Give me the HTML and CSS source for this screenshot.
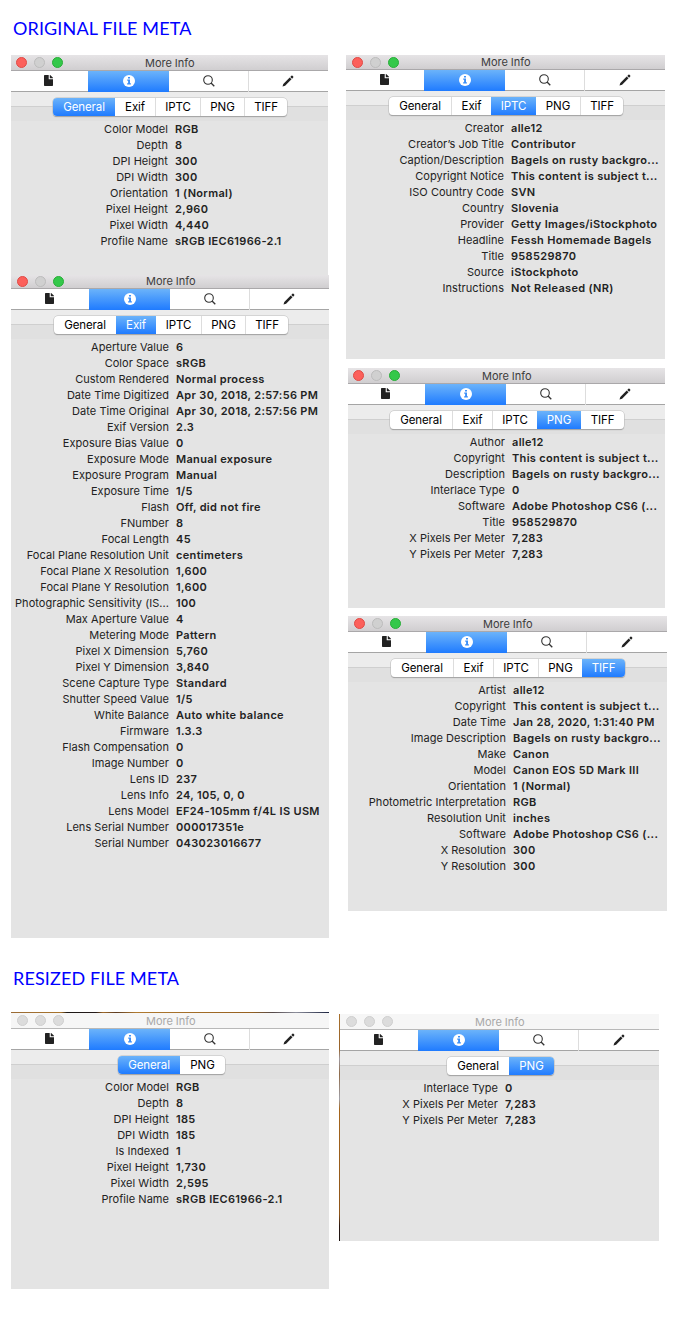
FILE: index.html
```html
<!DOCTYPE html>
<html lang="en">
<head>
<meta charset="utf-8">
<title>File meta</title>
<link rel="stylesheet" href="styles.css">
</head>
<body>
<svg class="defs" aria-hidden="true">
<symbol id="file" viewBox="0 0 9 11"><path d="M0 .7Q0 0 .7 0H4.700V4.200H9V10.300Q9 11 8.300 11H.7Q0 11 0 10.300ZM5.800 0H6.200L9 2.700V3.200H5.800Z" fill="#222"/></symbol>
<symbol id="info" viewBox="0 0 12 12"><circle cx="6" cy="6" r="6" fill="#fff"/><path d="M5 1.900h2v1.700H5ZM4.200 4.600H7V8.300H7.900V9.500H4.100V8.300H5.100V5.700H4.200Z" fill="#3c8ff8"/></symbol>
<symbol id="search" viewBox="0 0 12 12"><circle cx="5" cy="5" r="4.300" fill="none" stroke="#333" stroke-width="1.100"/><path d="M8 8L11.300 11.300" stroke="#333" stroke-width="1.300"/></symbol>
<symbol id="pen" viewBox="0 0 12 12"><path d="M.5 11.500L1.300 8.900L7.700 2.500L9.500 4.300L3.100 10.700ZM8.300 1.900L9.400.8Q9.900.3 10.500.8L11.200 1.500Q11.700 2.100 11.200 2.600L10.100 3.700Z" fill="#222"/></symbol>
</svg>
<main class="page">
<section class="group original">
<h2>ORIGINAL FILE META</h2>
<div class="columns">
<div class="column">
<article class="panel p-general">
<header><i class="red"></i><i></i><i class="green"></i><span>More Info</span></header>
<nav><a><svg class="file"><use href="#file"/></svg></a><a class="on"><svg><use href="#info"/></svg></a><a><svg><use href="#search"/></svg></a><a><svg><use href="#pen"/></svg></a></nav>
<div class="band"><div class="seg"><b class="on">General</b><b>Exif</b><b>IPTC</b><b>PNG</b><b>TIFF</b></div></div>
<dl>
<dt>Color Model</dt><dd>RGB</dd>
<dt>Depth</dt><dd>8</dd>
<dt>DPI Height</dt><dd>300</dd>
<dt>DPI Width</dt><dd>300</dd>
<dt>Orientation</dt><dd>1 (Normal)</dd>
<dt>Pixel Height</dt><dd>2,960</dd>
<dt>Pixel Width</dt><dd>4,440</dd>
<dt>Profile Name</dt><dd>sRGB IEC61966-2.1</dd>
</dl>
</article>
<article class="panel p-exif">
<header><i class="red"></i><i></i><i class="green"></i><span>More Info</span></header>
<nav><a><svg class="file"><use href="#file"/></svg></a><a class="on"><svg><use href="#info"/></svg></a><a><svg><use href="#search"/></svg></a><a><svg><use href="#pen"/></svg></a></nav>
<div class="band"><div class="seg"><b>General</b><b class="on">Exif</b><b>IPTC</b><b>PNG</b><b>TIFF</b></div></div>
<dl>
<dt>Aperture Value</dt><dd>6</dd>
<dt>Color Space</dt><dd>sRGB</dd>
<dt>Custom Rendered</dt><dd>Normal process</dd>
<dt>Date Time Digitized</dt><dd>Apr 30, 2018, 2:57:56 PM</dd>
<dt>Date Time Original</dt><dd>Apr 30, 2018, 2:57:56 PM</dd>
<dt>Exif Version</dt><dd>2.3</dd>
<dt>Exposure Bias Value</dt><dd>0</dd>
<dt>Exposure Mode</dt><dd>Manual exposure</dd>
<dt>Exposure Program</dt><dd>Manual</dd>
<dt>Exposure Time</dt><dd>1/5</dd>
<dt>Flash</dt><dd>Off, did not fire</dd>
<dt>FNumber</dt><dd>8</dd>
<dt>Focal Length</dt><dd>45</dd>
<dt>Focal Plane Resolution Unit</dt><dd>centimeters</dd>
<dt>Focal Plane X Resolution</dt><dd>1,600</dd>
<dt>Focal Plane Y Resolution</dt><dd>1,600</dd>
<dt>Photographic Sensitivity (IS...</dt><dd>100</dd>
<dt>Max Aperture Value</dt><dd>4</dd>
<dt>Metering Mode</dt><dd>Pattern</dd>
<dt>Pixel X Dimension</dt><dd>5,760</dd>
<dt>Pixel Y Dimension</dt><dd>3,840</dd>
<dt>Scene Capture Type</dt><dd>Standard</dd>
<dt>Shutter Speed Value</dt><dd>1/5</dd>
<dt>White Balance</dt><dd>Auto white balance</dd>
<dt>Firmware</dt><dd>1.3.3</dd>
<dt>Flash Compensation</dt><dd>0</dd>
<dt>Image Number</dt><dd>0</dd>
<dt>Lens ID</dt><dd>237</dd>
<dt>Lens Info</dt><dd>24, 105, 0, 0</dd>
<dt>Lens Model</dt><dd>EF24-105mm f/4L IS USM</dd>
<dt>Lens Serial Number</dt><dd>000017351e</dd>
<dt>Serial Number</dt><dd>043023016677</dd>
</dl>
</article>
</div>
<div class="column">
<article class="panel p-iptc">
<header><i class="red"></i><i></i><i class="green"></i><span>More Info</span></header>
<nav><a><svg class="file"><use href="#file"/></svg></a><a class="on"><svg><use href="#info"/></svg></a><a><svg><use href="#search"/></svg></a><a><svg><use href="#pen"/></svg></a></nav>
<div class="band"><div class="seg"><b>General</b><b>Exif</b><b class="on">IPTC</b><b>PNG</b><b>TIFF</b></div></div>
<dl>
<dt>Creator</dt><dd>alle12</dd>
<dt>Creator’s Job Title</dt><dd>Contributor</dd>
<dt>Caption/Description</dt><dd>Bagels on rusty backgro...</dd>
<dt>Copyright Notice</dt><dd>This content is subject t...</dd>
<dt>ISO Country Code</dt><dd>SVN</dd>
<dt>Country</dt><dd>Slovenia</dd>
<dt>Provider</dt><dd>Getty Images/iStockphoto</dd>
<dt>Headline</dt><dd>Fessh Homemade Bagels</dd>
<dt>Title</dt><dd>958529870</dd>
<dt>Source</dt><dd>iStockphoto</dd>
<dt>Instructions</dt><dd>Not Released (NR)</dd>
</dl>
</article>
<article class="panel p-png">
<header><i class="red"></i><i></i><i class="green"></i><span>More Info</span></header>
<nav><a><svg class="file"><use href="#file"/></svg></a><a class="on"><svg><use href="#info"/></svg></a><a><svg><use href="#search"/></svg></a><a><svg><use href="#pen"/></svg></a></nav>
<div class="band"><div class="seg"><b>General</b><b>Exif</b><b>IPTC</b><b class="on">PNG</b><b>TIFF</b></div></div>
<dl>
<dt>Author</dt><dd>alle12</dd>
<dt>Copyright</dt><dd>This content is subject t...</dd>
<dt>Description</dt><dd>Bagels on rusty backgro...</dd>
<dt>Interlace Type</dt><dd>0</dd>
<dt>Software</dt><dd>Adobe Photoshop CS6 (...</dd>
<dt>Title</dt><dd>958529870</dd>
<dt>X Pixels Per Meter</dt><dd>7,283</dd>
<dt>Y Pixels Per Meter</dt><dd>7,283</dd>
</dl>
</article>
<article class="panel p-tiff">
<header><i class="red"></i><i></i><i class="green"></i><span>More Info</span></header>
<nav><a><svg class="file"><use href="#file"/></svg></a><a class="on"><svg><use href="#info"/></svg></a><a><svg><use href="#search"/></svg></a><a><svg><use href="#pen"/></svg></a></nav>
<div class="band"><div class="seg"><b>General</b><b>Exif</b><b>IPTC</b><b>PNG</b><b class="on">TIFF</b></div></div>
<dl>
<dt>Artist</dt><dd>alle12</dd>
<dt>Copyright</dt><dd>This content is subject t...</dd>
<dt>Date Time</dt><dd>Jan 28, 2020, 1:31:40 PM</dd>
<dt>Image Description</dt><dd>Bagels on rusty backgro...</dd>
<dt>Make</dt><dd>Canon</dd>
<dt>Model</dt><dd>Canon EOS 5D Mark III</dd>
<dt>Orientation</dt><dd>1 (Normal)</dd>
<dt>Photometric Interpretation</dt><dd>RGB</dd>
<dt>Resolution Unit</dt><dd>inches</dd>
<dt>Software</dt><dd>Adobe Photoshop CS6 (...</dd>
<dt>X Resolution</dt><dd>300</dd>
<dt>Y Resolution</dt><dd>300</dd>
</dl>
</article>
</div>
</div>
</section>
<section class="group resized">
<h2>RESIZED FILE META</h2>
<div class="columns">
<article class="panel inactive p-rgeneral">
<header><i></i><i></i><i></i><span>More Info</span></header>
<nav><a><svg class="file"><use href="#file"/></svg></a><a class="on"><svg><use href="#info"/></svg></a><a><svg><use href="#search"/></svg></a><a><svg><use href="#pen"/></svg></a></nav>
<div class="band"><div class="seg short"><b class="on">General</b><b>PNG</b></div></div>
<dl>
<dt>Color Model</dt><dd>RGB</dd>
<dt>Depth</dt><dd>8</dd>
<dt>DPI Height</dt><dd>185</dd>
<dt>DPI Width</dt><dd>185</dd>
<dt>Is Indexed</dt><dd>1</dd>
<dt>Pixel Height</dt><dd>1,730</dd>
<dt>Pixel Width</dt><dd>2,595</dd>
<dt>Profile Name</dt><dd>sRGB IEC61966-2.1</dd>
</dl>
</article>
<article class="panel inactive p-rpng">
<header><i></i><i></i><i></i><span>More Info</span></header>
<nav><a><svg class="file"><use href="#file"/></svg></a><a class="on"><svg><use href="#info"/></svg></a><a><svg><use href="#search"/></svg></a><a><svg><use href="#pen"/></svg></a></nav>
<div class="band"><div class="seg short"><b>General</b><b class="on">PNG</b></div></div>
<dl>
<dt>Interlace Type</dt><dd>0</dd>
<dt>X Pixels Per Meter</dt><dd>7,283</dd>
<dt>Y Pixels Per Meter</dt><dd>7,283</dd>
</dl>
</article>
</div>
</section>
</main>
</body>
</html>
```

FILE: styles.css
```css
* { box-sizing: border-box; }
body { margin: 0; background: #fff; font: 11px/16px Inter, "Liberation Sans", sans-serif; color: #222; }
.defs { display: none; }
.page { height: 1318px; padding-left: 11px; }
.group h2 { margin: 0; padding-left: 2px; font: 400 18px/24px Lato, sans-serif; color: #00f; letter-spacing: .12px; white-space: nowrap; }
.original { padding-top: 16px; height: 967px; }
.original .columns { margin-top: 15px; gap: 17px; }
.resized h2 { line-height: 23px; }
.resized .columns { margin-top: 22px; gap: 10px; }
.columns { display: flex; align-items: flex-start; }
.column { width: 318px; flex: none; }

/* --shift nudges window contents right; --title sets the title bar height */
.panel { --shift: 0px; --title: 16px; width: 318px; flex: none; background: #e4e4e4; overflow: hidden; }
.p-general { width: 317px; height: 220px; }
.p-exif { --shift: 1px; --title: 14px; height: 663px; }
.p-iptc { --shift: 1px; --title: 15px; width: 319px; height: 304px; }
.p-png { width: 317px; height: 240px; margin: 9px 0 8px 2px; }
.p-tiff { --shift: 1px; width: 319px; height: 295px; margin-left: 2px; }
.p-rgeneral { --shift: 1px; height: 277px; padding-top: 1px; background: linear-gradient(90deg, #9a6b35, #a8742c 50px, #1c1714 56px, #241a1a 85px, #a06a2a 92px, #5a3a22 105px, #b07a30 125px, #96601f 240px, #54494a 262px, #8d8f9c 285px, #1d2440 318px) 0 0 / 100% 1px no-repeat #e4e4e4; }
.p-rpng { --shift: 1px; width: 320px; height: 227px; margin-top: 2px; padding-left: 1px; background: linear-gradient(#a8702c, #96622a 35px, #a09aa0 45px, #8f6a48 60px, #a0a0a8 85px, #a5651c 95px, #8f5518 200px, #2a1610 212px, #1c1412) 0 0 / 1px 100% no-repeat #e4e4e4; }

header { height: var(--title); display: flex; align-items: center; padding-left: calc(5px + var(--shift)); background: linear-gradient(#e6e4e6, #d0ced0); border-bottom: 1px solid #aaa8aa; }
header i { flex: none; width: 11px; height: 11px; margin-right: 7px; border-radius: 50%; background: #d0d0d0; border: 1px solid #bcbcbc; }
header .red { background: #fc605b; border-color: #e04a45; }
header .green { background: #34c84a; border-color: #28ad38; }
header span { margin-left: 75px; color: #3c3c3c; letter-spacing: -.03px; }
.p-exif header { padding-bottom: 2px; }
.p-exif header i { margin-top: 1px; }
.inactive header { background: #f6f6f6; border-color: #b8b8b8; }
.inactive header i { background: #dcdcdc; border-color: #cfcfcf; }
.inactive header span { color: #a8a8a8; }

nav { height: 21px; display: grid; grid-template-columns: calc(77px + var(--shift)) 81px 79px 1fr; background: linear-gradient(#fff 20px, #a5a5a5 20px); }
nav a { display: flex; padding-top: 4px; }
nav a + a { justify-content: center; }
nav a:first-child { padding-left: calc(33px + var(--shift)); }
nav a:last-child { border-left: 1px solid #ddd; padding-right: 1px; }
nav svg { width: 12px; height: 12px; }
nav svg.file { width: 9px; height: 11px; }
.on { background: linear-gradient(#6bb3fa, #1f7bff); }

.band { height: 29px; padding: 6px 0 0 calc(42px + var(--shift)); background: linear-gradient(#ececec 14px, #cfcfcf 14px, #cfcfcf 15px, #e0e0e0 15px); }
.seg { width: 234px; height: 18px; display: grid; grid-template-columns: 62px 40px 45px 44px 43px; border-radius: 4px; background: #fff; box-shadow: 0 0 0 .5px #bbb, 0 1px 1px #8a8a8a; }
.seg.short { width: 107px; margin-left: 64px; grid-template-columns: 62px 45px; }
.seg b { font-weight: 400; font-size: 11.5px; line-height: 18px; text-align: center; color: #000; border-left: 1px solid #ddd; letter-spacing: -.1px; }
.seg b:first-child { border-left: 0; border-radius: 4px 0 0 4px; }
.seg b:last-child { border-radius: 0 4px 4px 0; }
.seg .on { color: #fff; border-left: 0; }
.seg .on + b { border-left: 0; }

dl { margin: 0; display: grid; grid-template-columns: calc(157px + var(--shift)) 1fr; column-gap: 7px; grid-auto-rows: 16px; white-space: nowrap; }
dt { display: flex; justify-content: flex-end; letter-spacing: .04px; }
dd { margin: 0; font-weight: 600; letter-spacing: .33px; }
```
